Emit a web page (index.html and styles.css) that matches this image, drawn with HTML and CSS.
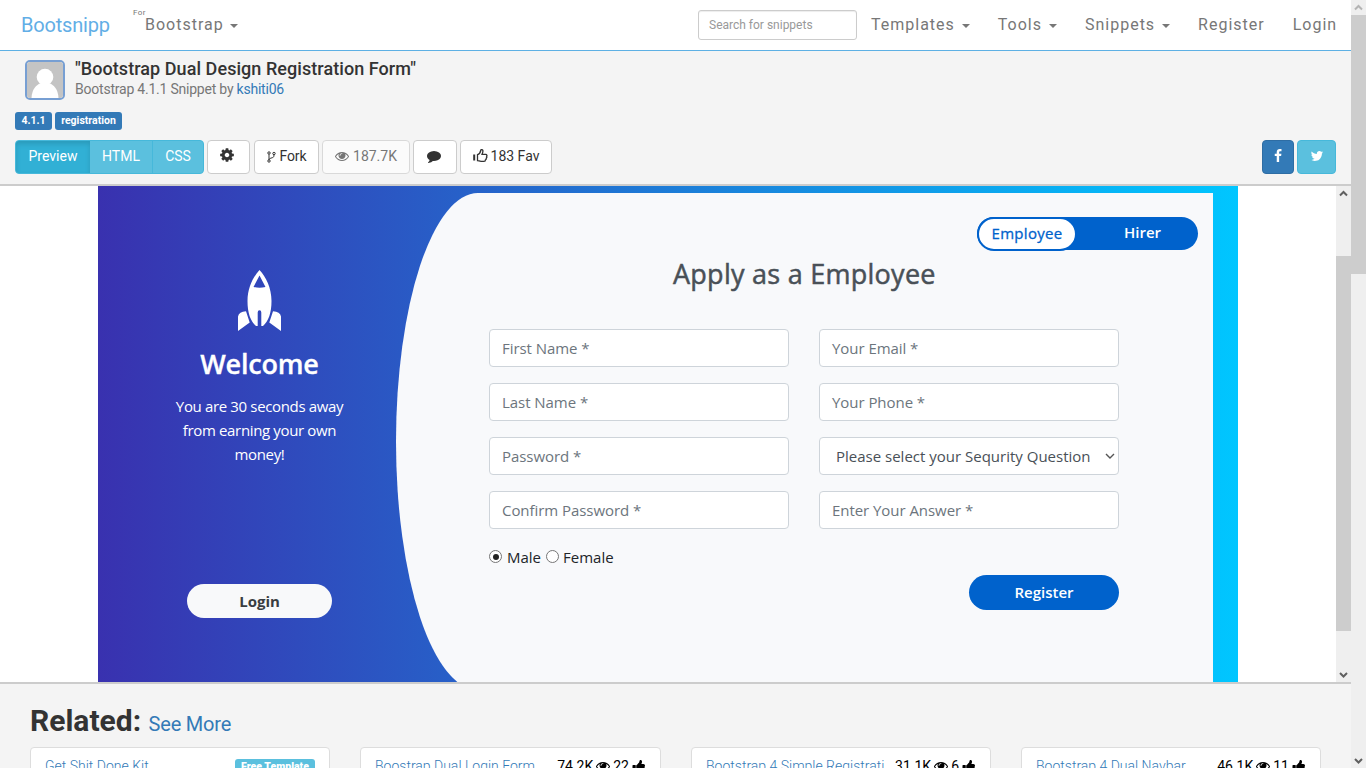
FILE: index.html
```html
<!DOCTYPE html>
<html lang="en">
<head>
<meta charset="utf-8">
<title>Bootstrap Dual Design Registration Form</title>
<link rel="stylesheet" href="styles.css">
</head>
<body>
<svg class="defs" width="0" height="0">
  <symbol id="cog" viewBox="0 0 1792 1792"><path d="M1152 896q0-106-75-181t-181-75-181 75-75 181 75 181 181 75 181-75 75-181zm512-109v222q0 12-8 23t-20 13l-185 28q-19 54-39 91 35 50 107 138 10 12 10 25t-9 23q-27 37-99 108t-94 71q-12 0-26-9l-138-108q-44 23-91 38-16 136-29 186-7 28-36 28h-222q-14 0-24.5-8.5t-11.500-21.500l-28-184q-49-16-90-37l-141 107q-10 9-25 9-14 0-25-11-126-114-165-168-7-10-7-23 0-12 8-23 15-21 51-66.500t54-70.500q-27-50-41-99l-183-27q-13-2-21-12.500t-8-23.500v-222q0-12 8-23t19-13l186-28q14-46 39-92-40-57-107-138-10-12-10-24 0-10 9-23 26-36 98.500-107.500t94.500-71.500q13 0 26 10l138 107q44-23 91-38 16-136 29-186 7-28 36-28h222q14 0 24.500 8.500t11.500 21.500l28 184q49 16 90 37l142-107q9-9 24-9 13 0 25 10 129 119 165 170 7 8 7 22 0 12-8 23-15 21-51 66.500t-54 70.500q26 50 41 98l183 28q13 2 21 12.500t8 23.500z"/></symbol>
  <symbol id="eye" viewBox="0 0 1792 1792"><path d="M1664 960q-152-236-381-353 61 104 61 225 0 185-131.500 316.500t-316.500 131.500-316.500-131.500-131.500-316.500q0-121 61-225-229 117-381 353 133 205 333.500 326.500t434.500 121.500 434.500-121.500 333.500-326.500zm-720-384q0-20-14-34t-34-14q-125 0-214.500 89.500t-89.500 214.500q0 20 14 34t34 14 34-14 14-34q0-86 61-147t147-61q20 0 34-14t14-34zm848 384q0 34-20 69-140 230-376.500 368.500t-499.500 138.500-499.500-139-376.500-368q-20-35-20-69t20-69q140-229 376.500-368t499.500-139 499.500 139 376.500 368q20 35 20 69z"/></symbol>
  <symbol id="comment" viewBox="0 0 1792 1792"><path d="M1792 896q0 174-120 321.500t-326 233-450 85.500q-70 0-145-8-198 175-460 242-49 14-114 22-17 2-30.500-9t-17.500-29v-1q-3-4-.5-12t2-10 4.500-9.500l6-9 7-8.500 8-9q7-8 31-34.500t34.500-38 31-39.500 32.500-51 27-59 26-76q-157-89-247.500-220t-90.500-281q0-130 71-248.500t191-204.500 286-136.500 348-50.500 348 50.500 286 136.500 191 204.500 71 248.500z"/></symbol>
  <symbol id="thumb" viewBox="0 0 1792 1792"><path d="M320 1344q0-26-19-45t-45-19q-27 0-45.500 19t-18.500 45q0 27 18.500 45.500t45.500 18.500q26 0 45-18.500t19-45.500zm160-512v640q0 26-19 45t-45 19h-288q-26 0-45-19t-19-45v-640q0-26 19-45t45-19h288q26 0 45 19t19 45zm1184 0q0 86-55 149 15 44 15 76 3 76-43 137 17 56 0 117-15 57-54 94 9 112-49 181-64 76-197 78h-129q-66 0-144-15.500t-121.500-29-120.500-39.500q-123-43-158-44-26-1-45-19.500t-19-44.500v-641q0-25 18-43.500t43-20.500q24-2 76-59t101-121q68-87 101-120 18-18 31-48t17.500-48.500 13.500-60.500q7-39 12.500-61t19.500-52 34-50q19-19 45-19 46 0 82.500 10.500t60 26 40 40.500 24 45 12 50 5 45 .5 39q0 38-9.500 76t-19 60-27.500 56q-3 6-10 18t-11 22-8 24h277q78 0 135 57t57 135z"/></symbol>
</svg>

<div class="window">
  <div class="page">
    <header class="navbar">
      <a class="brand">Bootsnipp</a>
      <a class="version"><span class="for">For</span>Bootstrap <i class="caret"></i></a>
      <span class="search">Search for snippets</span>
      <nav class="menu">
        <a>Templates <i class="caret"></i></a>
        <a>Tools <i class="caret"></i></a>
        <a>Snippets <i class="caret"></i></a>
        <a>Register</a>
        <a>Login</a>
      </nav>
    </header>

    <section class="snippet">
      <div class="author">
        <svg class="avatar" viewBox="0 0 36 36"><rect width="36" height="36" fill="#c4c4c4"/><circle cx="18" cy="15" r="8.300" fill="#fff"/><path d="M4.500 36C5 27 9 23 14 21h8c5 2 9 6 9.500 15z" fill="#fff"/></svg>
        <div>
          <h1>"Bootstrap Dual Design Registration Form"</h1>
          <p>Bootstrap 4.1.1 Snippet by <a>kshiti06</a></p>
        </div>
      </div>
      <div class="tags"><span>4.1.1</span><span>registration</span></div>
      <div class="toolbar">
        <div class="tabs"><span class="active">Preview</span><span class="html">HTML</span><span class="css">CSS</span></div>
        <span class="btn gear"><svg class="fa cog"><use href="#cog"/></svg></span>
        <span class="btn fork"><svg width="9" height="12" viewBox="0 0 9 12" fill="none" stroke="#333"><circle cx="2" cy="2" r="1.200"/><circle cx="2" cy="10" r="1.200"/><circle cx="7" cy="2.500" r="1.200"/><path d="M2 3.200v5.600M7 3.700c0 3-1 2.700-3 3.400-1.300.4-2 .9-2 1.700"/></svg>Fork</span>
        <span class="btn views"><svg class="fa"><use href="#eye"/></svg>187.7K</span>
        <span class="btn talk"><svg class="fa"><use href="#comment"/></svg></span>
        <span class="btn fav"><svg width="15" height="14" viewBox="0 0 15 14" fill="none" stroke="#333" stroke-width="1.300"><path d="M1.200 5.500v6" stroke-width="2"/><path d="M4.500 5.700c2-.6 3-2.700 3.400-4.700.2-.8 1.800-.5 2 .7.200 1.200-.5 2.700-.9 3.700h3.700c1.300 0 1.500 1.300.9 1.900.4.800.2 1.500-.4 1.900.2.800-.1 1.400-.7 1.600 0 1-.5 1.600-1.500 1.600H8c-1.500 0-2.300-.8-3.500-.8z"/></svg>183 Fav</span>
        <span class="social facebook"><svg class="fa" viewBox="0 0 1792 1792"><path d="M1343 12v264h-157q-86 0-116 36t-30 108v189h293l-39 296h-254v759h-306v-759h-255v-296h255v-218q0-186 104-288.500t277-102.500q147 0 228 12z"/></svg></span>
        <span class="social twitter"><svg class="fa" viewBox="0 0 1792 1792"><path d="M1684 408q-67 98-162 167 1 14 1 42 0 130-38 259.500t-115.500 248.500-184.500 210.500-258 146-323 54.500q-271 0-496-145 35 4 78 4 225 0 401-138-105-2-188-64.500t-114-159.500q33 5 61 5 43 0 85-11-112-23-185.500-111.500t-73.500-205.500v-4q68 38 146 41-66-44-105-115t-39-154q0-88 44-163 121 149 294.500 238.500t371.500 99.500q-8-38-8-74 0-134 94.500-228.500t228.500-94.500q140 0 236 102 109-21 205-78-37 115-142 178 93-10 186-50z"/></svg></span>
      </div>
    </section>

    <section class="preview">
      <div class="register">
        <aside class="welcome">
          <svg class="rocket" viewBox="0 0 43 61"><path fill="#fff" fill-rule="evenodd" d="M21.500 0C28 7 33.500 18 33.500 31c0 12-3 20-8.500 25h-1.700V42.500q0-2.200-1.800-2.200t-1.800 2.200V56H18C12.500 51 9.500 43 9.500 31 9.500 18 15 7 21.500 0zm0 5.500L15.500 17q6 1.300 12 0zM8 41.200l3.700 11.300L0 61V46.500q1-5 8-5.300zm27 0-3.700 11.300L43 61V46.500q-1-5-8-5.300z"/></svg>
          <h3>Welcome</h3>
          <p>You are 30 seconds away<br>from earning your own<br>money!</p>
          <span class="login">Login</span>
        </aside>
        <div class="panel">
          <div class="switch"><span class="employee">Employee</span><span class="hirer">Hirer</span></div>
          <h3 class="heading">Apply as a Employee</h3>
          <div class="fields">
            <span class="field">First Name *</span>
            <span class="field">Your Email *</span>
            <span class="field">Last Name *</span>
            <span class="field">Your Phone *</span>
            <span class="field">Password *</span>
            <span class="field select"><span>Please select your Sequrity Question</span><svg width="10" height="7" viewBox="0 0 10 7" fill="none" stroke="#555" stroke-width="1.400"><path d="M1 1l4 4 4-4"/></svg></span>
            <span class="field">Confirm Password *</span>
            <span class="field">Enter Your Answer *</span>
          </div>
          <div class="gender"><i class="radio on"></i><span class="male">Male</span><i class="radio"></i><span class="female">Female</span></div>
          <span class="submit">Register</span>
        </div>
      </div>
      <div class="scroll inner"><svg viewBox="0 0 15 15"><path d="M4 9.500l3.500-3.500 3.500 3.500"/></svg><i></i><svg class="end" viewBox="0 0 15 15"><path d="M4 6l3.500 3.500 3.500-3.500"/></svg></div>
    </section>

    <section class="related">
      <h2>Related: <a>See More</a></h2>
      <div class="cards">
        <div class="card"><a>Get Shit Done Kit</a><span class="badge">Free Template</span></div>
        <div class="card"><a>Boostrap Dual Login Form</a><span class="stats">74.2K <svg class="fa"><use href="#eye"/></svg> 22 <svg class="fa"><use href="#thumb"/></svg></span></div>
        <div class="card"><a>Bootstrap 4 Simple Registrati</a><span class="stats">31.1K <svg class="fa"><use href="#eye"/></svg> 6 <svg class="fa"><use href="#thumb"/></svg></span></div>
        <div class="card"><a>Bootstrap 4 Dual Navbar</a><span class="stats">46.1K <svg class="fa"><use href="#eye"/></svg> 11 <svg class="fa"><use href="#thumb"/></svg></span></div>
      </div>
    </section>
  </div>
  <div class="scroll outer"><svg class="dim" viewBox="0 0 15 15"><path d="M4 9.500l3.500-3.500 3.500 3.500"/></svg><i></i><svg class="end" viewBox="0 0 15 15"><path d="M4 6l3.500 3.500 3.500-3.500"/></svg></div>
</div>
</body>
</html>
```
FILE: styles.css
```css
* { box-sizing: border-box; }
body { margin: 0; font: 14px/20px Roboto, sans-serif; color: #333; overflow: hidden; }
h1, h2, h3, p { margin: 0; }
a { color: #337ab7; }
.defs { position: absolute; }
.fa { width: 14px; height: 14px; fill: currentColor; }
.window { display: flex; width: 1366px; height: 768px; overflow: hidden; white-space: nowrap; }
.page { width: 1351px; height: 768px; overflow: hidden; background: #f4f4f4; }

/* Top navigation */
.navbar { display: flex; height: 51px; background: #fff; border-bottom: 1px solid #5db0e4; }
.navbar a { color: #777; font-size: 16px; letter-spacing: 1px; line-height: 50px; }
.navbar .brand { width: 124px; padding-left: 21px; color: #62aee6; font-size: 20px; letter-spacing: -.2px; }
.version { position: relative; width: 574px; padding-left: 21px; }
.for { position: absolute; left: 9px; top: 8px; font-size: 8px; line-height: 10px; letter-spacing: .4px; }
.caret { display: inline-block; margin-left: 2px; vertical-align: middle; border: 4px solid transparent; border-top-color: #777; border-bottom: 0; }
.version .caret { margin-left: 1px; }
.search { width: 159px; height: 30px; margin-top: 10px; padding-left: 10px; border: 1px solid #ccc; border-radius: 3px; font-size: 12px; line-height: 28px; color: #999; box-shadow: inset 0 1px 1px rgba(0,0,0,.075); }
.menu { display: flex; gap: 28px; padding-left: 14px; }

/* Snippet header */
.snippet { height: 133px; padding: 9px 15px 0; }
.author { display: flex; gap: 10px; padding-left: 10px; }
.avatar { width: 40px; height: 40px; border: 2px solid #779fd3; border-radius: 5px; }
h1 { font-size: 18px; line-height: 18px; font-weight: 500; letter-spacing: .06px; }
.author p { color: #777; line-height: 22px; font-size: 14px; letter-spacing: -.22px; }
.tags { display: flex; gap: 3px; margin-top: 12px; }
.tags span { width: 37px; height: 18px; text-align: center; border-radius: 3px; background: #337ab7; color: #fff; font-size: 10.5px; font-weight: 700; line-height: 17px; }
.tags span + span { width: 67px; }
.toolbar { display: flex; margin-top: 10px; height: 34px; line-height: 31px; }
.tabs { display: flex; width: 189px; margin-right: 3px; border: 1px solid #46b8da; border-radius: 4px; background: #5bc0de; color: #fff; text-align: center; overflow: hidden; }
.tabs .active { width: 74px; background: #31b0d5; box-shadow: inset 0 3px 5px rgba(0,0,0,.125); }
.tabs .html { width: 63px; border-right: 1px solid #46b8da; }
.tabs .css { flex: 1; }
.btn { display: flex; align-items: center; justify-content: center; gap: 4px; padding-bottom: 1px; background: #fff; border: 1px solid #ccc; border-radius: 4px; }
.gear { width: 43px; margin-right: 4px; padding: 0 3px 4px 0; }
.fa.cog { width: 16px; height: 16px; }
.fork { width: 65px; margin-right: 3px; letter-spacing: -.15px; }
.views { width: 88px; margin-right: 3px; opacity: .65; }
.views .fa { margin-bottom: 1px; }
.talk { width: 44px; margin-right: 3px; padding: 0 3px 2px 0; }
.fav { width: 92px; gap: 3px; }
.fav svg { margin-bottom: 2px; }
.social { display: flex; align-items: center; justify-content: center; color: #fff; border-radius: 4px; padding-bottom: 2px; }
.facebook { width: 32px; margin: 0 3px 0 auto; background: #337ab7; border: 1px solid #2e6da4; }
.twitter { width: 39px; background: #5bc0de; border: 1px solid #46b8da; }

/* Live preview */
.preview { display: flex; height: 500px; padding-left: 98px; background: #fff; border: solid #ccc; border-width: 2px 0; overflow: hidden; font-family: "Open Sans", sans-serif; }
.register { display: flex; width: 1140px; height: 540px; background: linear-gradient(to right, #3931af, #00c6ff); }
.welcome { display: flex; flex-direction: column; align-items: center; width: 298px; padding: 84px 0 0 25px; color: #fff; }
.rocket { width: 43px; height: 61px; }
.welcome h3 { margin-top: 16px; font-size: 27px; line-height: 34px; font-weight: 600; letter-spacing: -.2px; -webkit-text-stroke: .3px; }
.welcome p { margin-top: 13px; font-size: 15px; line-height: 24px; text-align: center; letter-spacing: -.35px; }
.login { width: 145px; height: 34px; margin-top: 118px; border-radius: 17px; background: #f8f9fa; color: #383d41; font-weight: 700; font-size: 15px; line-height: 34px; text-align: center; }
.panel { display: flex; flex-direction: column; width: 817px; height: 497px; margin-top: 7px; padding: 24px 15px 0 93px; background: #f8f9fb; border-radius: 82px 0 0 82px / 248.5px 0 0 248.5px; }
.switch { display: flex; align-self: flex-end; width: 221px; height: 33px; border-radius: 17px; background: #0062cc; font-size: 15px; }
.employee { width: 100px; height: 34px; border: 2px solid #0062cc; border-radius: 17px; background: #fff; color: #0062cc; line-height: 29px; text-align: center; letter-spacing: .3px; -webkit-text-stroke: .3px; }
.hirer { padding-left: 47px; color: #fff; font-weight: 600; line-height: 31px; }
.heading { margin: 7px 0 0 184px; font-size: 27px; line-height: 34px; font-weight: 400; letter-spacing: .26px; -webkit-text-stroke: .5px; color: #495057; }
.fields { display: grid; grid-template-columns: 300px 300px; gap: 16px 30px; margin-top: 38px; }
.field { height: 38px; padding-left: 12px; border: 1px solid #ced4da; border-radius: 4px; background: #fff; color: #6c757d; font-size: 15px; line-height: 37px; letter-spacing: -.05px; }
.select { display: flex; align-items: center; padding-left: 16px; color: #495057; letter-spacing: 0; }
.select span { width: 255px; overflow: hidden; }
.select svg { margin-left: 14px; }
.gender { display: flex; align-items: center; height: 24px; margin-top: 16px; font-size: 15px; color: #212529; }
.radio { display: grid; place-items: center; flex: none; width: 13px; height: 13px; margin-bottom: 1px; border: 1px solid #767676; border-radius: 50%; background: #fff; }
.radio.on::after { content: ""; width: 6px; height: 6px; border-radius: 50%; background: #222; }
.male { width: 44px; padding-left: 5px; }
.female { padding-left: 4px; }
.submit { width: 150px; height: 35px; margin: 6px 0 0 480px; border-radius: 18px; background: #0062cc; color: #fff; font-weight: 600; font-size: 15px; line-height: 35px; text-align: center; }

/* Scrollbars */
.scroll { display: flex; flex-direction: column; width: 15px; background: #efefef; }
.scroll svg { width: 15px; height: 15px; fill: none; stroke: #606060; stroke-width: 2; }
.scroll .dim { stroke: #b4b4b4; }
.scroll i { background: #cdcdcd; }
.scroll .end { margin-top: auto; }
.inner { margin-left: 98px; }
.inner i { height: 375px; margin-top: 55px; }
.outer i { height: 259px; }

/* Related snippets */
.related { padding: 21px 30px 0; }
h2 { height: 32px; font-size: 30px; line-height: 32px; font-weight: 700; }
h2 a { font-size: 20px; font-weight: 400; letter-spacing: -.2px; }
.cards { display: grid; grid-template-columns: 300px 301px 300px 300px; gap: 30px; margin-top: 10px; }
.card { display: flex; justify-content: space-between; height: 60px; padding: 8px 14px; background: #fff; border: 1px solid #ddd; border-radius: 4px; color: #000; }
.card a { font-weight: 300; }
.stats { display: flex; gap: 3px; align-items: center; height: 20px; }
.badge { width: 80px; height: 18px; margin-top: 3px; text-align: center; border-radius: 3px; background: #5bc0de; color: #fff; font-size: 10.5px; line-height: 16px; font-weight: 900; }
```
